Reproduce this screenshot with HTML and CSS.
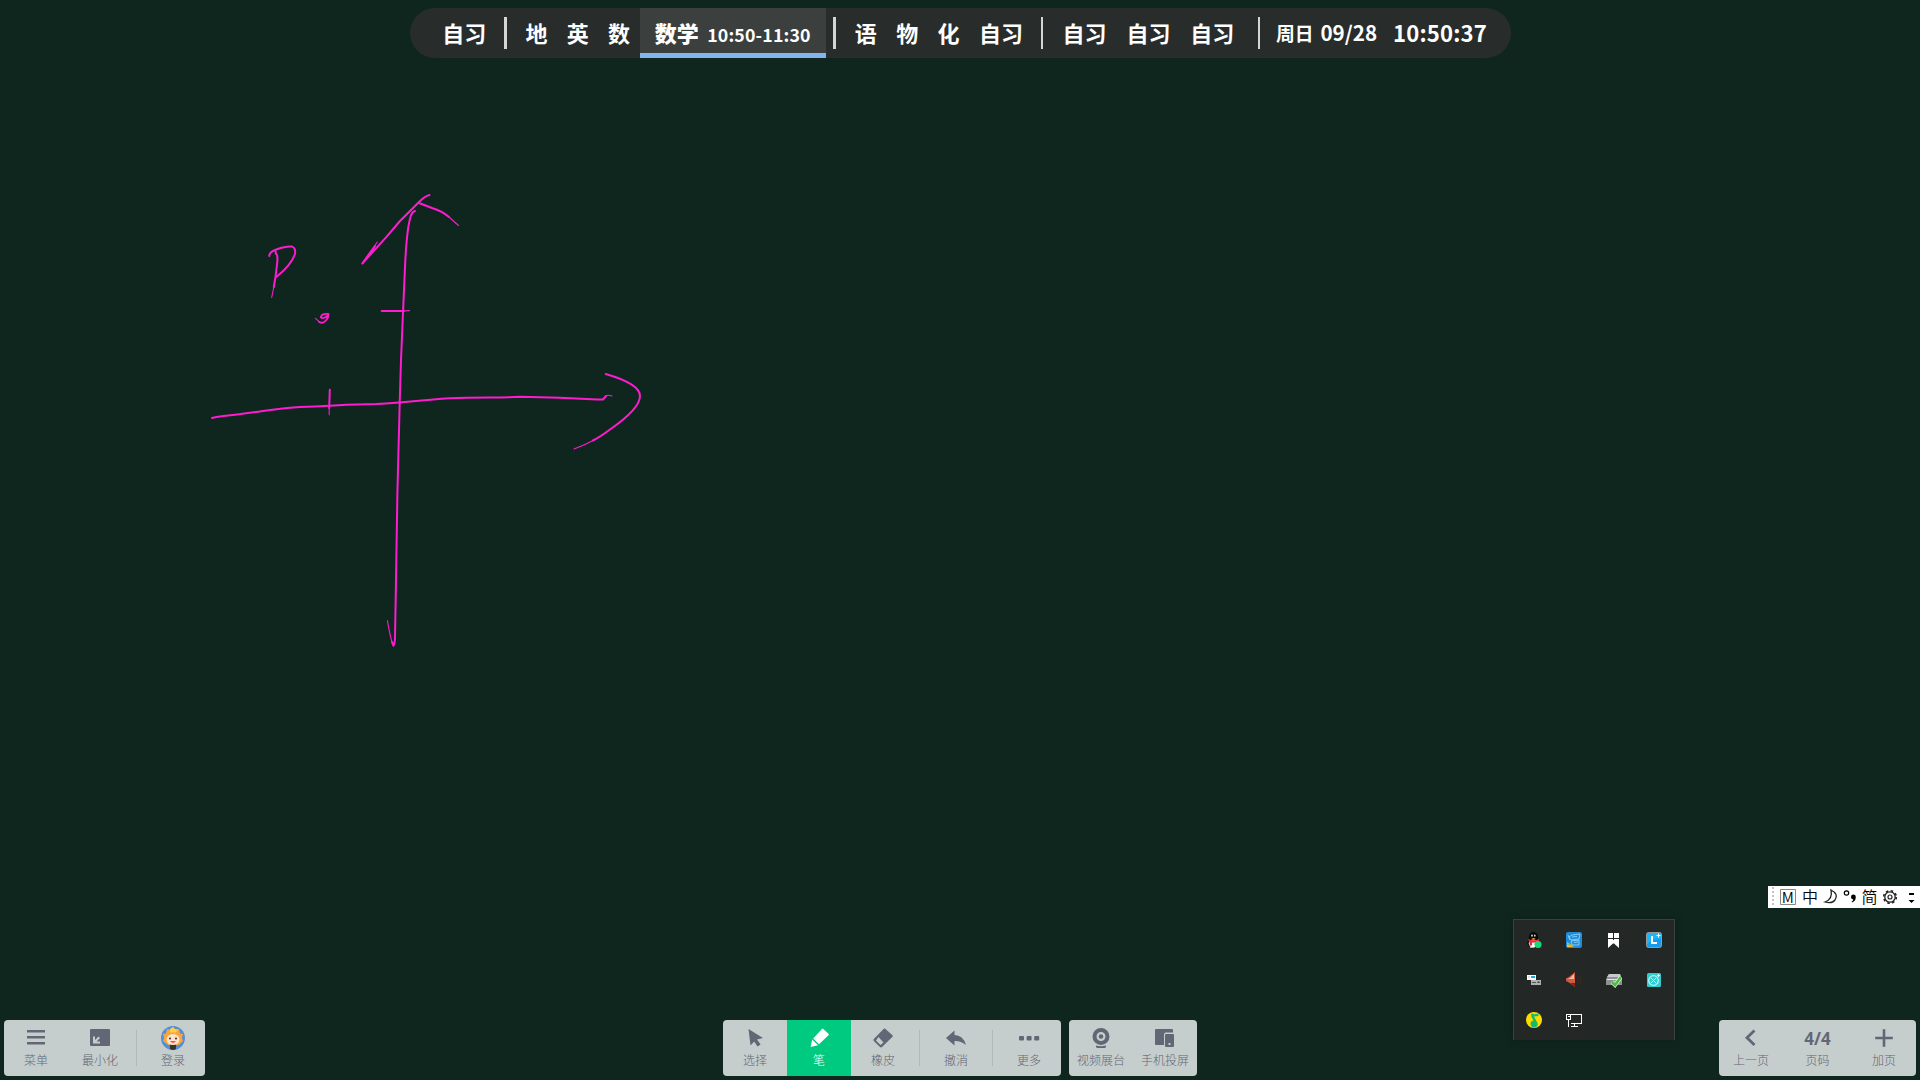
FILE: index.html
```html
<!DOCTYPE html>
<html lang="zh-CN">
<head>
<meta charset="utf-8">
<title>白板</title>
<link rel="stylesheet" href="styles.css">
</head>
<body>
<main class="board">
  <svg class="ink" viewBox="0 0 1920 1080" aria-hidden="true">
    <path d="M415 211C411 212 410 218 408.300 227C406.500 240 405.500 255 405 267L403 313L401 360L399.700 403L397.400 493L395.800 593L395 638Q394.700 645 393.500 645.700L392 642"/>
    <path class="thin" d="M393 645Q391 641 387.400 620.700"/>
    <path d="M212 418Q220 416 235 414.700C260 412 280 408 300 407C330 406.500 345 404 376.700 404C405 402.500 430 399.500 450 398.300C480 397 500 398 520 396.800Q540 397.500 560 397.800L597 399.500H603L606 396"/>
    <path class="thin" d="M606 396Q608 394.500 612 396"/>
    <path d="M605.700 374C630 381 640 388 640 396C640 405 628 417 610 429.500Q600 437 593 440.500"/>
    <path class="thin" d="M593 440.500Q585 445 574 449"/>
    <path class="thin" d="M377.300 242L362.500 263"/>
    <path d="M375 246L362.300 263.500L386.700 236.700L400 221L418.300 202.700Q425 196 429.500 195"/>
    <path d="M418.300 202.700Q423 204.500 432 208Q442 211 449 217"/>
    <path class="thin" d="M449 217L458.500 225.500"/>
    <path d="M381.700 311H404"/><path class="thin" d="M404 311L409.500 310.600"/>
    <path d="M329.800 389.700L329.200 408"/><path class="thin" d="M329.200 408V414.700"/>
    <path d="M269.300 256Q269 252 277 249.300Q286 246 292 246.600Q296 248 295 254C292 263 285 270 276.700 276.700"/>
    <path d="M275.500 251.500L276 254Q278 254 277.200 263L275.500 277L273.800 287"/><path class="thin" d="M273.800 287L271.700 297.500"/>
    <path class="thin" d="M315.500 318.300L319 321.700"/>
    <path class="dot" d="M319 321.700Q322.500 324.300 326 320.500Q328.800 317.500 328.500 314Q321.500 313 320.800 317.500Q324 319.300 327.800 315.500"/>
  </svg>

  <header class="schedule">
    <span class="lesson lesson-wide first">自习</span>
    <i class="bar"></i>
    <span class="lesson">地</span><span class="lesson">英</span><span class="lesson">数</span>
    <span class="current"><b>数学</b><small>10:50-11:30</small></span>
    <i class="bar"></i>
    <span class="lesson">语</span><span class="lesson">物</span><span class="lesson">化</span><span class="lesson lesson-wide">自习</span>
    <i class="bar"></i>
    <span class="lesson lesson-wide">自习</span><span class="lesson lesson-wide">自习</span><span class="lesson lesson-wide">自习</span>
    <i class="bar bar-last"></i>
    <span class="date"><span>周日</span><span class="day">09/28</span></span>
    <time class="clock">10:50:37</time>
  </header>

  <div class="ime">
    <svg viewBox="0 0 152 22">
      <g fill="#c4c4c4"><path d="M4 1h2v2h-2zM4 5h2v2h-2zM4 9h2v2h-2zM4 13h2v2h-2zM4 17h2v2h-2z"/></g>
      <path d="M12.500 3.500h15v15h-15z" fill="none" stroke="#888"/>
      <g class="ime-text"><text x="13.800" y="16.500" font-size="15">M</text><text x="34" y="16.800" font-size="16">中</text><text x="93.500" y="17" font-size="16">简</text></g>
      <path d="M63 4Q71 8 67 14Q64 18 57 16Q65 13 63 4Z" fill="none" stroke="#222" stroke-width="1.300"/>
      <circle cx="78.500" cy="7" r="2.200" fill="none" stroke="#000" stroke-width="1.200"/>
      <path d="M83 11a2.400 2.400 0 1 1 4.800 0q0 4-3.800 5.500l-.4-.8q1.500-.8 1.700-2.300q-2.300 0-2.300-2.400z"/>
      <circle cx="122" cy="11" r="5.200" fill="none" stroke="#222" stroke-width="1.300"/>
      <circle cx="122" cy="11" r="6.300" fill="none" stroke="#222" stroke-width="1.600" stroke-dasharray="2.470 2.470"/>
      <circle cx="122" cy="11" r="2" fill="none" stroke="#222" stroke-width="1.200"/>
      <path d="M141 7h5v2h-5zM140.500 14h6l-3 3z"/>
    </svg>
  </div>

  <aside class="tray">
    <svg viewBox="0 0 16 16"><ellipse cx="7.500" cy="5.500" rx="4.700" ry="5.500" fill="#080808"/><ellipse cx="7.500" cy="11" rx="6.300" ry="4.500" fill="#111"/><ellipse cx="7.300" cy="11.500" rx="4.500" ry="4" fill="#fff"/><path d="M4 15h4v1h-4z" fill="#e9a12b"/><ellipse cx="6" cy="3.600" rx=".8" ry="1.200" fill="#ddd"/><ellipse cx="8.800" cy="3.600" rx=".8" ry="1.200" fill="#ddd"/><path d="M5 6h5l-2.500 1z" fill="#f5b31d"/><path d="M2 7q5.500 2.500 11 0v2.500q-4 1.500-7 1v3h-2.500v-3.500z" fill="#e92c37"/><circle cx="12" cy="12.500" r="3.600" fill="#19d878"/></svg>
    <svg viewBox="0 0 16 16"><rect width="16" height="16" rx="2" fill="#1f8bdb"/><path d="M1 10q5 3 7 5H1z" fill="#eaba3d"/><path d="M1 12q4 0 5 3" stroke="#75bd68" fill="none"/><g fill="none" stroke="#8fd3fa" stroke-width=".9"><path d="M3 5l3-2 8-1-1 5-8 1zM5 9l8-1v5H6zM6 5l5-.5M8 10.500l4-.5M2 3l2 5"/></g></svg>
    <svg viewBox="0 0 16 16" fill="#fff"><path d="M2 1h5v5H2zM8 1h5v5H8zM2 7h5v4.500L2 16zM8 7h5v9l-5-4.500zM7 8h1v3.500H7z"/></svg>
    <svg viewBox="0 0 16 16"><rect x=".5" y=".5" width="15" height="15" rx="2" fill="#199bed" stroke="#969ba0"/><path d="M1 1h14v6Q8 6 1 12z" fill="#1bb5fa"/><path d="M6 4v7h5" fill="none" stroke="#fff" stroke-width="2"/><path d="M12.500 1.500v4M10.500 3.500h4" stroke="#fff"/></svg>

    <svg viewBox="0 0 16 16"><path d="M1 3h9v5H1z" fill="#fff"/><path d="M5 4h4v2H5z" fill="#17a9ed"/><path d="M2 4h2v2H2z" fill="#ddd"/><path d="M5 8h10v5H5z" fill="#aeb1b1"/><path d="M6 10h4v1H6zM12 9l2 1v1h-3z" fill="#555"/></svg>
    <svg viewBox="0 0 16 16"><path d="M0 6.500L3 5l6-5v15l-6-4.500L0 9z" fill="#d5593d"/><path d="M1 7l3-1 4-4v5z" fill="#f4b7a3"/><path d="M4 11l5 4v-4z" fill="#792818"/><path d="M11.500 5q2 3 0 6M14 3q2.500 5 0 10" fill="none" stroke="#43251f"/></svg>
    <svg viewBox="0 0 16 16"><path d="M3 2h11l2 5v6H0V7z" fill="#8c9192"/><path d="M3 2h11l1 3H1z" fill="#c8c8cc"/><path d="M1 7h14v1H1z" fill="#e4e4e4"/><path d="M6 10l3 3 6-8" fill="none" stroke="#d7f7d4" stroke-width="4"/><path d="M6 10l3 3 6-8" fill="none" stroke="#48bb40" stroke-width="2.600"/></svg>
    <svg viewBox="0 0 16 16"><rect x="1" y="1" width="14" height="14" rx="1.500" fill="#2fcdd2"/><circle cx="7.500" cy="8.500" r="4.800" fill="none" stroke="#b4f5ef" stroke-width="1.300"/><path d="M5 6l5 5M10 6l-5 5M12.500 2v3M11 3.500h3" stroke="#c9ffff"/></svg>

    <svg viewBox="0 0 16 16"><circle cx="8" cy="8" r="8" fill="#ffdc00"/><path d="M5 1.500Q9 3 12.500 1.500V4L8 4.500l3.500 6.500a3.500 3.500 0 1 1-4-2.500L5.500 5Z" fill="#18b96b"/></svg>
    <svg viewBox="0 0 16 16" fill="none" stroke="#fff" shape-rendering="crispEdges"><path d="M4.500 2.500h11v9h-11M.5 2.500h4v5h-4zM2.500 7.500v7M8.500 11.500v3M5 14.500h7M1.500 4.500h2" /></svg>
  </aside>

  <footer class="dock">
    <nav class="panel panel-left">
      <div class="tool"><svg viewBox="0 0 24 24"><path d="M3 3h18v2.600H3zM3 9h18v2.600H3zM3 15h18v2.600H3z"/></svg><span>菜单</span></div>
      <div class="tool"><svg viewBox="0 0 24 24"><path fill-rule="evenodd" d="M3 2h18q1 0 1 1v15q0 1-1 1H3q-1 0-1-1V3q0-1 1-1zM5 9.500V16.500H12V14.500H8.500L12 11L10.600 9.600L7 13V9.500Z"/></svg><span>最小化</span></div>
      <i class="split"></i>
      <div class="tool"><svg viewBox="0 0 24 24"><circle cx="12" cy="11" r="12" fill="#568ed5"/><path d="M3 11L2 7l3-.5L6 2l3.500 1L12 0l2.500 3L18 2l1 4.500 3 .5-1 4 1 3-4 4H7l-5-4z" fill="#f5a542"/><path d="M9 2l3-2 2 2 3 .5-2 3H9z" fill="#ffd045"/><path d="M9 17h6v5q-3 2-6 0z" fill="#37332d"/><ellipse cx="12" cy="12.500" rx="6.500" ry="5.500" fill="#ffe3c8"/><circle cx="9" cy="11.500" r="1" fill="#36251e"/><circle cx="15" cy="11.500" r="1" fill="#36251e"/><path d="M9 14h6q-3 4-6 0z" fill="#f05262"/></svg><span>登录</span></div>
    </nav>

    <div class="panel-group">
      <nav class="panel">
        <div class="tool"><svg viewBox="0 0 24 24"><path d="M5.500 2L20 11l-6 1.400 3.600 5L14.500 19.500l-3.300-5L7.500 18.500Z"/></svg><span>选择</span></div>
        <div class="tool active"><svg viewBox="0 0 24 24"><path d="M16 1.800L21.500 6.700Q22.200 7.400 21.500 8.200L12 17.300L6.200 11.500L15 1.900Q15.500 1.400 16 1.800ZM5.200 12.500L11 18.200L3.600 20Z"/></svg><span>笔</span></div>
        <div class="tool"><svg viewBox="0 0 24 24"><path fill-rule="evenodd" d="M14.200 1.800L21.500 8.200Q22.200 9 21.500 9.800L11 20Q10 20.800 9 20L2.800 14Q2 13 2.800 12L12.800 1.800Q13.500 1.200 14.200 1.800ZM7.500 10L5 13.500L9.500 18L12.500 15.500Z"/></svg><span>橡皮</span></div>
        <i class="split"></i>
        <div class="tool"><svg viewBox="0 0 24 24"><path d="M10.500 3.500V8Q19 8 22 18Q17 13.800 10.500 14V18.500L2 11Z"/></svg><span>撤消</span></div>
        <i class="split"></i>
        <div class="tool"><svg viewBox="0 0 24 24"><rect x="2" y="9" width="5" height="4.500" rx="1"/><rect x="9.600" y="9" width="5" height="4.500" rx="1"/><rect x="17.200" y="9" width="5" height="4.500" rx="1"/></svg><span>更多</span></div>
      </nav>
      <nav class="panel">
        <div class="tool"><svg viewBox="0 0 24 24"><circle cx="12" cy="9.500" r="6.500" fill="none" stroke="currentColor" stroke-width="4"/><circle cx="12" cy="9.500" r="2.300"/><path d="M7 18.500q5 1.600 10 0v1q0 1.500-2 1.500H9q-2 0-2-1.500z"/></svg><span>视频展台</span></div>
        <div class="tool"><svg viewBox="0 0 24 24"><path d="M3 2h16q1 0 1 1v2.500h-7q-2 0-2 2V18H3q-1 0-1-1V3q0-1 1-1z"/><path fill-rule="evenodd" d="M13 7h7q1 0 1 1v11q0 1-1 1h-7q-1 0-1-1V8q0-1 1-1zM15.500 16v2h2v-2z"/></svg><span>手机投屏</span></div>
      </nav>
    </div>

    <nav class="panel panel-right">
      <div class="tool"><svg viewBox="0 0 24 24"><path d="M15.500 3.500L8 10.800L15.500 18" fill="none" stroke="currentColor" stroke-width="2.800"/></svg><span>上一页</span></div>
      <div class="tool"><strong>4/4</strong><span>页码</span></div>
      <div class="tool"><svg viewBox="0 0 24 24"><path d="M10.700 2.300h2.600v7.400h7.500v2.600h-7.500v7.500h-2.600v-7.500H3.200V9.700h7.500z"/></svg><span>加页</span></div>
    </nav>
  </footer>
</main>
</body>
</html>
```
FILE: styles.css
```css
* { box-sizing: border-box; }
body {
  margin: 0;
  overflow: hidden;
  background: #0f261f;
  font-family: "Noto Sans CJK SC", "Noto Sans", sans-serif;
}
i { font-style: normal; }
svg { display: block; }

.board {
  position: relative;
  width: 1920px;
  height: 1080px;
  padding-top: 8px;
  display: flex;
  flex-direction: column;
  align-items: center;
}
.ink {
  position: absolute;
  inset: 0;
  width: 1920px;
  height: 1080px;
  fill: none;
  stroke: #ff1bcf;
  stroke-width: 2;
  stroke-linecap: round;
  stroke-linejoin: round;
}
.ink .thin { stroke-width: 1.1; }
.ink .dot { stroke-width: 1.800; }

.schedule {
  position: relative;
  width: 1101px;
  height: 50px;
  border-radius: 25px;
  background: #282d2b;
  color: #fff;
  display: flex;
  align-items: center;
  white-space: nowrap;
  font-size: 22px;
  font-weight: 700;
}
.lesson {
  flex: none;
  width: 41.300px;
  padding-bottom: 2px;
  text-align: center;
  line-height: 48px;
}
.lesson-wide { width: 63.900px; }
.first { margin-left: 22.800px; }
.bar {
  flex: none;
  width: 2.700px;
  height: 32px;
  margin: 0 9.200px 0 7.700px;
  background: #d4d5d5;
}
.bar-last { margin: 0 15.500px 0 13.500px; }
.current {
  flex: none;
  width: 186px;
  height: 50px;
  padding-left: 15px;
  border-bottom: 5px solid #83b4ed;
  background: #3b403e;
  display: flex;
  align-items: baseline;
  gap: 8.500px;
  line-height: 48px;
}
.current small { font-size: 17.750px; letter-spacing: .15px; }
.date {
  display: flex;
  align-items: baseline;
  gap: 7px;
  width: 103px;
  padding-bottom: 1px;
  font-size: 18.800px;
  line-height: 48px;
}
.day { font-size: 20.600px; }
.clock {
  margin-left: 14px;
  font-size: 22.100px;
  letter-spacing: .2px;
  line-height: 48px;
  padding-bottom: 2px;
}

.ime {
  position: absolute;
  right: 0;
  top: 886px;
  width: 152px;
  height: 22px;
  background: #fff;
}
.ime svg { overflow: visible; }
.ime-text { font-family: "Noto Sans CJK SC", sans-serif; font-weight: 350; }

.tray {
  position: absolute;
  left: 1513px;
  top: 919px;
  width: 162px;
  height: 121px;
  padding: 12px 12px 0;
  border: 1px solid #3a413f;
  border-bottom: 0;
  background: #232726;
  box-shadow: 0 0 8px rgba(0, 0, 0, .25);
  display: grid;
  grid-template-columns: repeat(4, 16px);
  grid-auto-rows: 16px;
  gap: 24px;
}

.dock {
  position: relative;
  width: 100%;
  height: 56px;
  margin-top: 962px;
  padding: 0 4px;
  display: grid;
  grid-template-columns: 201px 1fr 197px;
}
.panel-group {
  display: flex;
  gap: 8px;
  margin-left: 518px;
}
.panel {
  display: flex;
  height: 56px;
  border-radius: 4px;
  overflow: hidden;
  background: #c6cecd;
  color: #626675;
}
.panel-right { justify-content: space-between; }
.tool {
  flex: none;
  width: 64px;
  display: flex;
  flex-direction: column;
  align-items: center;
  padding-top: 7px;
  font-size: 12px;
  font-weight: 300;
  line-height: 18px;
}
.tool svg {
  width: 24px;
  height: 24px;
  fill: currentColor;
  overflow: visible;
}
.tool strong {
  height: 24px;
  font: 700 17px/24px "Open Sans", sans-serif;
}
.tool.active { background: #00ca80; color: #fff; }
.split {
  flex: none;
  width: 1px;
  height: 36px;
  margin: 10px 4px;
  background: #b0b8b8;
}
```
